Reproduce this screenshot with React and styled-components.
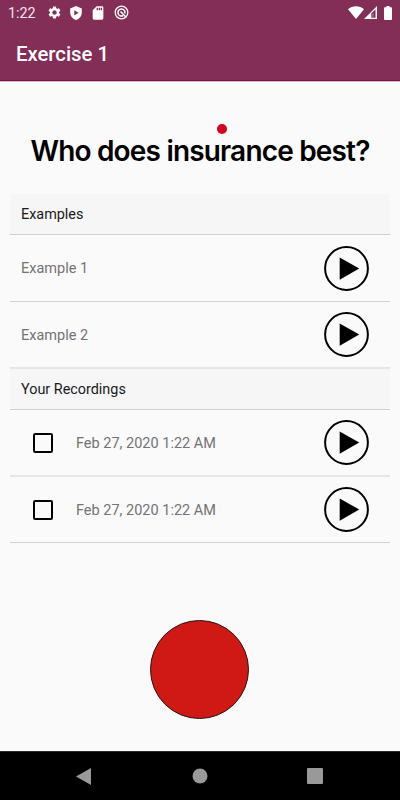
import React from "react";
import styled, { createGlobalStyle } from "styled-components";
import { MdSettings, MdSdCard } from "react-icons/md";

const GlobalStyle = createGlobalStyle`
  * {
    box-sizing: border-box;
  }

  body {
    margin: 0;
    background-color: #fafafa;
    font-family: Roboto, sans-serif;
  }
`;

const Screen = styled.div`
  display: flex;
  flex-direction: column;
  width: 400px;
  height: 800px;
  overflow: hidden;
  background-color: #fafafa;
`;

const Header = styled.header`
  height: 82px;
  flex-shrink: 0;
  background-color: #832e57;
  border-bottom: 1px solid #c9c0c5;
  box-shadow: inset 0 -1px 0 #7c0f46;
`;

const StatusBar = styled.div`
  display: flex;
  align-items: center;
  justify-content: space-between;
  height: 25px;
  padding: 0 8px;
  color: #fff;
`;

const StatusGroup = styled.div`
  display: flex;
  align-items: center;
  gap: ${(props) => props.$gap}px;

  svg {
    display: block;
  }
`;

const Clock = styled.span`
  width: 31px;
  color: #f3e6ec;
  font-size: 14.3px;
  line-height: 26px;
`;

const AppTitle = styled.h1`
  margin: 0;
  padding-left: 16px;
  color: #fff;
  font-size: 20.3px;
  font-weight: 500;
  line-height: 59px;
`;

const Main = styled.main`
  display: flex;
  flex-direction: column;
  flex: 1;
  padding: 42px 10px 0;
`;

const Marker = styled.div`
  width: 10px;
  height: 10px;
  margin-left: 207px;
  border-radius: 50%;
  background-color: #d6001c;
`;

const Question = styled.h2`
  margin: 0 0 26px;
  color: #000;
  font-family: Inter, sans-serif;
  font-size: 28px;
  font-weight: 600;
  line-height: 34px;
  letter-spacing: -0.82px;
  text-align: center;
  white-space: nowrap;
`;

const SectionTitle = styled.div`
  height: 41px;
  padding-left: 11px;
  border-bottom: 1px solid #cfcfcf;
  background-color: #f6f6f6;
  color: #1a1a1a;
  font-size: 14.4px;
  line-height: 42px;
`;

const Row = styled.div`
  display: flex;
  align-items: center;
  height: ${(props) => props.$height}px;
  padding: 0 21px 0 ${(props) => (props.$selectable ? "23px" : "11px")};
  border-bottom: ${(props) =>
    props.$soft ? "2px solid #e6e6e6" : "1px solid #d2d2d2"};
`;

const Checkbox = styled.div`
  width: 20px;
  height: 20px;
  margin-right: 23px;
  border: 2px solid #000;
  border-radius: 2px;
`;

const RowLabel = styled.span`
  flex: 1;
  padding-top: 2px;
  color: #737373;
  font-size: 14.5px;
  line-height: 20px;
`;

const PlayButton = styled.button`
  width: 45px;
  height: 45px;
  padding: 0;
  border: none;
  background: none;

  svg {
    display: block;
  }
`;

const RecordButton = styled.button`
  width: 99px;
  height: 99px;
  margin: 77px 0 0 140px;
  padding: 0;
  border: 1px solid #1f1a1a;
  border-radius: 50%;
  background-color: #d01814;
`;

const NavBar = styled.nav`
  display: flex;
  align-items: center;
  justify-content: space-between;
  height: 49px;
  flex-shrink: 0;
  padding: 0 77px 0 76px;
  border-top: 1px solid #2b2b2b;
  background-color: #000;
  color: #999;
`;

const ShieldIcon = () => (
  <svg width="12" height="14" viewBox="0 0 12 14">
    <path
      d="M6 0 0.2 2.4v4.1C0.2 10 2.7 13 6 14c3.300-1 5.800-4 5.800-7.500V2.400z"
      fill="#fff"
    />
    <path d="M4.300 4.200v5.200L8.600 6.800z" fill="#832e57" />
  </svg>
);

const RadarIcon = () => (
  <svg width="15" height="15" viewBox="0 0 15 15" fill="none" stroke="#fff">
    <circle cx="7.500" cy="7.500" r="6.300" strokeWidth="1.300" />
    <path d="M9.200 10.500a3.500 3.500 0 1 1 1.600-2" strokeWidth="1.500" />
    <path d="M6.500 6.500 11.700 11.700" strokeWidth="1.600" />
  </svg>
);

const WifiIcon = () => (
  <svg width="16" height="13" viewBox="0 0 16 13">
    <path d="M8 13 0 3.200C2.200 1.200 5 0.200 8 0.200s5.800 1 8 3z" fill="#fff" />
  </svg>
);

const SignalIcon = () => (
  <svg width="13" height="13" viewBox="0 0 13 13">
    <path
      d="M0 13 13 0v13zM7.300 7.600v4.200h4.200V3.300z"
      fill="#fff"
      fillRule="evenodd"
    />
    <path d="M8.500 8v3.500h1V7z" fill="#b98ba1" />
  </svg>
);

const BatteryIcon = () => (
  <svg width="8" height="14" viewBox="0 0 9 14" preserveAspectRatio="none">
    <path
      d="M2.700 0h3.600v1.300H8a1 1 0 0 1 1 1V13a1 1 0 0 1-1 1H1a1 1 0 0 1-1-1V2.300a1 1 0 0 1 1-1h1.700z"
      fill="#fff"
    />
  </svg>
);

const PlayIcon = () => (
  <svg width="45" height="45" viewBox="0 0 45 45">
    <circle
      cx="22.500"
      cy="22.500"
      r="21.400"
      fill="none"
      stroke="#000"
      strokeWidth="2"
    />
    <path d="M15.700 11.400v22.300L35.200 22.500z" fill="#000" />
  </svg>
);

const examples = [
  { id: 1, label: "Example 1", height: 67 },
  { id: 2, label: "Example 2", height: 67, soft: true },
];

const recordings = [
  { id: 1, label: "Feb 27, 2020 1:22 AM", height: 67, soft: true },
  { id: 2, label: "Feb 27, 2020 1:22 AM", height: 66 },
];

const ListRow = ({ item, selectable }) => (
  <Row $height={item.height} $soft={item.soft} $selectable={selectable}>
    {selectable && <Checkbox role="checkbox" aria-checked="false" />}
    <RowLabel>{item.label}</RowLabel>
    <PlayButton aria-label="Play">
      <PlayIcon />
    </PlayButton>
  </Row>
);

const App = () => {
  return (
    <Screen>
      <GlobalStyle />
      <Header>
        <StatusBar>
          <StatusGroup $gap={8}>
            <Clock>1:22</Clock>
            <MdSettings size={15} />
            <ShieldIcon />
            <MdSdCard size={16} />
            <RadarIcon />
          </StatusGroup>
          <StatusGroup $gap={7}>
            <StatusGroup $gap={0}>
              <WifiIcon />
              <SignalIcon />
            </StatusGroup>
            <BatteryIcon />
          </StatusGroup>
        </StatusBar>
        <AppTitle>Exercise 1</AppTitle>
      </Header>
      <Main>
        <Marker />
        <Question>Who does insurance best?</Question>
        <SectionTitle>Examples</SectionTitle>
        {examples.map((item) => (
          <ListRow key={item.id} item={item} />
        ))}
        <SectionTitle>Your Recordings</SectionTitle>
        {recordings.map((item) => (
          <ListRow key={item.id} item={item} selectable />
        ))}
        <RecordButton aria-label="Record" />
      </Main>
      <NavBar>
        <svg width="15" height="17" viewBox="0 0 15 17">
          <path d="M15 0v17L0 8.500z" fill="currentColor" />
        </svg>
        <svg width="17" height="16" viewBox="0 0 17 16">
          <circle cx="9" cy="8" r="7.500" fill="currentColor" />
        </svg>
        <svg width="16" height="16" viewBox="0 0 16 16">
          <rect width="16" height="16" rx="1" fill="currentColor" />
        </svg>
      </NavBar>
    </Screen>
  );
};

export default App;
